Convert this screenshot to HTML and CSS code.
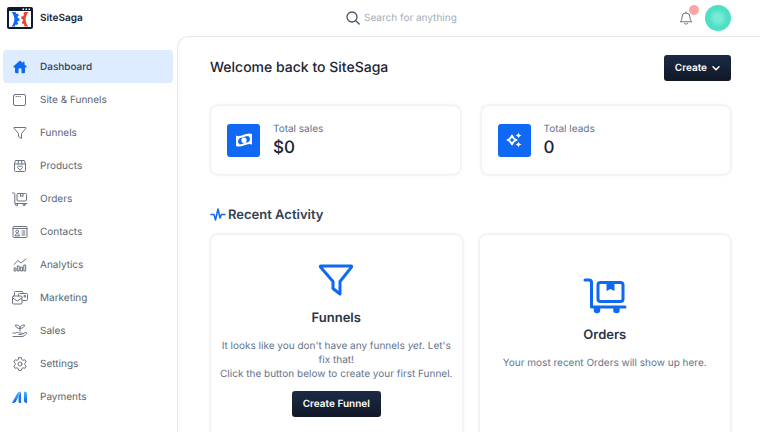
FILE: index.html
```html
<!DOCTYPE html>
<html lang="en">
<head>
    <meta charset="UTF-8">
    <meta name="viewport" content="width=device-width, initial-scale=1.0">
    <title>SiteSaga Dashboard</title>
    <link rel="stylesheet" href="styles.css">
</head>
<body>
    <header class="topbar">
        <a class="brand" href="#">
            <svg class="brand-logo" viewBox="0 0 26 22">
                <rect x="1" y="1" width="24" height="20" rx="1" fill="#fff" stroke="#0d1b2e" stroke-width="2"/>
                <path d="M1 1h24v3H1z" fill="#0d1b2e"/>
                <path d="M15.500 1.500h1.500v1.500h-1.500zM18.500 1.500h1.500v1.500h-1.500zM21.500 1.500h1.500v1.500h-1.500z" fill="#fff"/>
                <path d="M4.500 5h4l.8 2 1.500-.5 1 1.800-1.300 1.400.5 1.300 1.500.7v2l-1.700.3-.5 1.300 1 1.200-1.300 1.500-1.500-.5-.5 2H4.500c3.800-4 3.800-10.500 0-14.500z" fill="#0f69f5"/>
                <path d="M21.500 5h-4l-1 1.500.5 1.500-1 1.300-1.800.2v2l1.600 1 .2 1.500-1.300 1 .8 2 1.500-.2.500 2.700h4c-3.800-4-3.800-10.500 0-14.500z" fill="#f2412f"/>
            </svg>
            <span>SiteSaga</span>
        </a>
        <div class="search">
            <svg class="search-icon" viewBox="0 0 14 14" fill="none" stroke="#475569" stroke-width="1.300" stroke-linecap="round">
                <circle cx="6" cy="6" r="5"/>
                <path d="M9.700 9.700l3.500 3.300"/>
            </svg>
            <input type="search" placeholder="Search for anything" aria-label="Search for anything">
        </div>
        <div class="account">
            <button class="bell" aria-label="Notifications">
                <svg viewBox="0 0 14 14" fill="none" stroke="#64748b" stroke-linecap="round" stroke-linejoin="round">
                    <path d="M7 .8v1M1.500 10.500C3 9 3 7.500 3 6a4 4 0 0 1 8 0c0 1.500 0 3 1.500 4.500zM5.500 12.500c.8.9 2.200.9 3 0"/>
                </svg>
                <span class="bell-badge"></span>
            </button>
            <button class="avatar" aria-label="Account"></button>
        </div>
    </header>

    <div class="layout">
        <nav class="sidebar">
            <a class="nav-item active" href="#">
                <svg viewBox="0 0 16 16">
                    <path d="M8 1.500L1.500 7.300c-.5.500-.2 1.200.5 1.200h1V13c0 .8.4 1.200 1.200 1.200h2.300V10.500c0-.8.5-1.200 1.500-1.200s1.500.4 1.500 1.200v3.700h2.300c.8 0 1.200-.4 1.200-1.200V8.500h1c.7 0 1-.7.5-1.200l-2-1.800V2.800h-1.800v1.100z" fill="#0f69f5"/>
                </svg>
                <span>Dashboard</span>
            </a>
            <a class="nav-item" href="#">
                <svg viewBox="0 0 16 16">
                    <rect x="1.500" y="2.500" width="12" height="11" rx="1.500"/>
                    <path d="M4 4.500h.5M6 4.500h.5M8 4.500h.5"/>
                </svg>
                <span>Site &amp; Funnels</span>
            </a>
            <a class="nav-item" href="#">
                <svg viewBox="0 0 16 16">
                    <path d="M2.300 2.500h11.400c.4 0 .5.400.3.700L9.500 8.500v5L6.500 11.500v-3L2 3.200c-.2-.3-.1-.7.300-.7z"/>
                </svg>
                <span>Funnels</span>
            </a>
            <a class="nav-item" href="#">
                <svg viewBox="0 0 16 16">
                    <path d="M2.500 6v6.500a1 1 0 0 0 1 1h9a1 1 0 0 0 1-1V6l-1.300-3.500H3.800zM2.500 6h11M6.500 2.500L6 6M9.500 2.500l.5 3.500"/>
                    <path d="M8 12L5.700 9.700C4.800 8.500 6.800 7.200 8 8.700c1.200-1.500 3.200-.2 2.300 1z"/>
                </svg>
                <span>Products</span>
            </a>
            <a class="nav-item" href="#">
                <svg viewBox="0 0 16 16">
                    <path d="M.5 2h1.300c.6 0 1 .4 1 1v9.500H15"/>
                    <rect x="5" y="2.500" width="9.500" height="7.500" rx="1"/>
                    <path d="M8.500 2.500v3l1.300-.8 1.200.8v-3"/>
                    <circle cx="4.500" cy="13.800" r="1"/>
                    <circle cx="12" cy="13.800" r="1"/>
                </svg>
                <span>Orders</span>
            </a>
            <a class="nav-item" href="#">
                <svg viewBox="0 0 16 16">
                    <rect x="1" y="2.500" width="14" height="11" rx="1"/>
                    <path d="M1 4.500h14M10 7h3M10 9h3M10 11h3M3 11.500c0-2.500 4.500-2.500 4.500 0z"/>
                    <circle cx="5.200" cy="7.500" r="1.400"/>
                </svg>
                <span>Contacts</span>
            </a>
            <a class="nav-item" href="#">
                <svg viewBox="0 0 16 16">
                    <path d="M2 7.500l4-4 3 2.500 5-4M2.500 11h1.500v3H2.500zM5.700 9h1.500v5H5.700zM9 10h1.500v4H9zM12.200 8h1.500v6h-1.500z"/>
                </svg>
                <span>Analytics</span>
            </a>
            <a class="nav-item" href="#">
                <svg viewBox="0 0 16 16">
                    <path d="M2.500 5V2.500a1 1 0 0 1 1-1H10a1 1 0 0 1 1 1M6.500 6V4.500a1 1 0 0 1 1-1H14.500a1 1 0 0 1 1 1V9.500a1 1 0 0 1-1 1H11M12.500 5.500h1v1.500h-1z"/>
                    <rect x=".5" y="6" width="9.500" height="8" rx="1"/>
                    <path d="M.7 8l4.500 3L9.800 8"/>
                </svg>
                <span>Marketing</span>
            </a>
            <a class="nav-item" href="#">
                <svg viewBox="0 0 16 16">
                    <path d="M8 8V4.800C8 3 6.200 2 3.500 2c0 2.500 2 3.500 4.500 3.500C10.500 5.500 12.500 4 12.500 2 9.800 2 8 3 8 4.800"/>
                    <path d="M1 10h2.500c1.500-1.300 3-.5 4 0h2c1.200 0 1.200 1.500 0 1.500H7M10.500 11l2.800-1.500c1.200-.5 2 .5 1.200 1.300-1.500 1.500-3 2.700-4.500 2.700H1"/>
                </svg>
                <span>Sales</span>
            </a>
            <a class="nav-item" href="#">
                <svg viewBox="0 0 16 16">
                    <path d="M6.700 1.700h2.600l.5 1.900 1.200.7 1.900-.5 1.300 2.200-1.400 1.400v1.300l1.400 1.400-1.300 2.200-1.900-.5-1.200.7-.5 1.900H6.700l-.5-1.900-1.200-.7-1.900.5-1.300-2.200 1.400-1.400V7.400L1.800 6l1.300-2.200 1.900.5 1.200-.7z"/>
                    <circle cx="8" cy="8" r="2"/>
                </svg>
                <span>Settings</span>
            </a>
            <a class="nav-item" href="#">
                <svg viewBox="0 0 16 16">
                    <defs>
                        <linearGradient id="pay" x1="0" y1="0" x2="0" y2="1">
                            <stop offset="0" stop-color="#3fc3fa"/>
                            <stop offset="1" stop-color="#1557e8"/>
                        </linearGradient>
                    </defs>
                    <path d="M0 14L5.500 4Q6.500 2.500 8.500 2.500L4 12.500Q3.200 14 0 14z" fill="url(#pay)"/>
                    <path d="M7.500 5.500L9 2.500V14H7.500Q6.500 14 6.500 12V8z" fill="#1f6df0"/>
                    <path d="M12 2.500Q15 2.500 15 5V14Q12 14 12 11.500z" fill="url(#pay)"/>
                </svg>
                <span>Payments</span>
            </a>
        </nav>

        <main class="content">
            <div class="page-head">
                <h1>Welcome back to SiteSaga</h1>
                <button class="btn">
                    Create
                    <svg class="chevron" viewBox="0 0 8 8" fill="none" stroke="#fff" stroke-width="1.500" stroke-linecap="round" stroke-linejoin="round">
                        <path d="M1 2.700l3 3 3-3"/>
                    </svg>
                </button>
            </div>

            <div class="stats">
                <section class="card stat">
                    <span class="stat-icon">
                        <svg viewBox="0 0 18 18">
                            <path d="M1 4.500C6 7 11 .5 17 3v10.500C12 11 7 17.500 1 15z" fill="#fff"/>
                            <path d="M4.500 7.200c3.500 0 5.500-2.200 9-2.200 0 .9.500 1.400 1.300 1.500v3.300c-.8.1-1.300.5-1.300 1.400-3.500 0-5.500 2.200-9 2.200 0-.9-.6-1.400-1.300-1.500V8.600c.7 0 1.300-.5 1.300-1.400z" fill="#0f69f5"/>
                            <ellipse cx="9" cy="9.200" rx="2.600" ry="2.800" fill="#fff"/>
                        </svg>
                    </span>
                    <div>
                        <p class="stat-label">Total sales</p>
                        <p class="stat-value">$0</p>
                    </div>
                </section>
                <section class="card stat">
                    <span class="stat-icon">
                        <svg viewBox="0 0 18 18">
                            <path d="M7 4.500c.8 2.600 1.900 3.700 4.500 4.500-2.600.8-3.700 1.900-4.500 4.500C6.200 10.900 5.100 9.800 2.500 9 5.100 8.200 6.200 7.100 7 4.500z" fill="none" stroke="#fff" stroke-width="1.800" stroke-linejoin="round"/>
                            <path d="M13.500 1.500c.5 1.900 1.100 2.500 3 3-1.900.5-2.500 1.100-3 3-.5-1.900-1.100-2.500-3-3 1.900-.5 2.500-1.100 3-3zM13.500 10.500c.5 1.900 1.100 2.500 3 3-1.900.5-2.500 1.100-3 3-.5-1.900-1.100-2.500-3-3 1.900-.5 2.500-1.100 3-3z" fill="#fff"/>
                        </svg>
                    </span>
                    <div>
                        <p class="stat-label">Total leads</p>
                        <p class="stat-value">0</p>
                    </div>
                </section>
            </div>

            <h2 class="section-title">
                <svg viewBox="0 0 16 16" fill="none" stroke="#0f69f5" stroke-width="1.500" stroke-linecap="round" stroke-linejoin="round">
                    <path d="M1 7.500h3L5.500 13 8 2l2 9 1.500-3.500H15"/>
                </svg>
                Recent Activity
            </h2>

            <div class="activity">
                <section class="card panel">
                    <svg class="panel-icon" viewBox="0 0 44 36" fill="none" stroke="#0f69f5" stroke-width="3" stroke-linejoin="round">
                        <path d="M7 5h30c.7 0 .9.600.5 1.100L26 20.500V33L19 27.500v-7L6.500 6.100c-.4-.5-.2-1.100.5-1.100z"/>
                    </svg>
                    <h3>Funnels</h3>
                    <p>It looks like you don't have any funnels <em>yet</em>. Let's fix that!<br>Click the button below to create your first Funnel.</p>
                    <button class="btn">Create Funnel</button>
                </section>
                <section class="card panel panel-orders">
                    <svg class="panel-icon" viewBox="0 0 44 36" fill="none" stroke="#0f69f5" stroke-width="3" stroke-linecap="round" stroke-linejoin="round">
                        <path d="M2 2h4c1.500 0 2.500 1 2.500 2.500V29H42"/>
                        <rect x="15" y="4.500" width="25" height="19" rx="2.500"/>
                        <path d="M23.500 5h8v8l-4-2-4 2z" fill="#0f69f5" stroke="none"/>
                        <circle cx="14" cy="32" r="3.300" fill="#0f69f5" stroke="none"/>
                        <circle cx="33.500" cy="32" r="3.300" fill="#0f69f5" stroke="none"/>
                    </svg>
                    <h3>Orders</h3>
                    <p>Your most recent Orders will show up here.</p>
                </section>
            </div>
        </main>
    </div>
</body>
</html>
```

FILE: styles.css
```css
:root {
    --blue: #0f69f5;
    --ink: #1a2433;
    --muted: #64748b;
    --line: #e2e8ee;
    --sidebar: 177px;
}

* {
    box-sizing: border-box;
}
body {
    display: flex;
    flex-direction: column;
    height: 100vh;
    margin: 0;
    overflow: hidden;
    background: #fff;
    color: var(--ink);
    font-family: Inter, sans-serif;
    font-size: 10px;
    line-height: 14px;
    text-rendering: geometricPrecision;
}
h1, h2, h3, p {
    margin: 0;
}
svg {
    display: block;
    flex: none;
}
a {
    color: inherit;
    text-decoration: none;
}
button {
    padding: 0;
    border: none;
    background: none;
    font-family: inherit;
    cursor: pointer;
    text-rendering: inherit;
}

/* Top bar */
.topbar {
    display: flex;
    align-items: center;
    flex: none;
    height: 36px;
    padding-right: 29px;
}
.brand {
    display: flex;
    align-items: center;
    gap: 7px;
    width: var(--sidebar);
    padding-left: 7px;
    font-weight: 600;
}
.brand-logo {
    width: 26px;
    height: 22px;
}
.search {
    display: flex;
    align-items: center;
    gap: 4px;
    flex: 1;
    padding-left: 169px;
}
.search-icon {
    width: 14px;
    height: 14px;
}
.search input {
    width: 160px;
    padding: 0;
    border: none;
    outline: none;
    background: none;
    font-family: inherit;
    font-size: 10px;
    text-rendering: inherit;
}
.search input::placeholder {
    color: #a3adba;
}
.account {
    display: flex;
    align-items: center;
    gap: 12px;
}
.bell {
    position: relative;
}
.bell svg {
    width: 14px;
    height: 14px;
}
.bell-badge {
    position: absolute;
    top: -6px;
    right: -6px;
    width: 10px;
    height: 10px;
    border-radius: 50%;
    background: #ffa3a3;
}
.avatar {
    width: 26px;
    height: 26px;
    border-radius: 50%;
    background: radial-gradient(#79ead4 20%, #4de0c4 50%);
}

/* Sidebar */
.layout {
    display: flex;
    flex: 1;
    min-height: 0;
}
.sidebar {
    flex: none;
    width: var(--sidebar);
    padding: 14px 4px 0 3px;
}
.nav-item {
    display: flex;
    align-items: center;
    gap: 12px;
    height: 33px;
    padding-left: 9px;
    border-radius: 4px;
    color: #5b6470;
}
.nav-item svg {
    width: 16px;
    height: 16px;
    fill: none;
    stroke: #6b7480;
    stroke-width: 1;
    stroke-linecap: round;
    stroke-linejoin: round;
}
.nav-item.active svg,
.nav-item:last-child svg {
    stroke: none;
}
.nav-item.active {
    background: #ddecfe;
    color: #334155;
    font-weight: 500;
}

/* Main content */
.content {
    flex: 1;
    padding: 18px 29px 0 32px;
    border-top: 1px solid var(--line);
    border-left: 1px solid var(--line);
    border-top-left-radius: 12px;
    overflow: hidden;
}
.page-head {
    display: flex;
    justify-content: space-between;
    align-items: center;
}
h1 {
    font-size: 14px;
    font-weight: 500;
    line-height: 18px;
}
.btn {
    display: inline-flex;
    align-items: center;
    gap: 5px;
    height: 26px;
    padding: 0 11px;
    border-radius: 3px;
    background: linear-gradient(#1b2a44, #111927);
    color: #fff;
    font-size: 10px;
    font-weight: 600;
}
.chevron {
    width: 8px;
    height: 8px;
}
.card {
    border: 1px solid #f0f1f3;
    border-radius: 8px;
    background: #fff;
    box-shadow: 0 0 3px rgba(15, 23, 42, 0.1);
}
.stats {
    display: grid;
    grid-template-columns: 1fr 1fr;
    gap: 20px;
    margin-top: 24px;
}
.stat {
    display: flex;
    align-items: center;
    gap: 13px;
    height: 70px;
    padding: 0 16px;
}
.stat-icon {
    display: grid;
    place-items: center;
    width: 33px;
    height: 33px;
    border-radius: 3px;
    background: var(--blue);
}
.stat-icon svg {
    width: 18px;
    height: 18px;
}
.stat-label {
    color: var(--muted);
    line-height: 16px;
}
.stat-value {
    font-size: 17px;
    font-weight: 500;
    line-height: 22px;
}
.section-title {
    display: flex;
    align-items: center;
    gap: 2px;
    margin: 31px 0 10px;
    font-size: 13px;
    font-weight: 600;
    line-height: 18px;
    color: #334155;
}
.section-title svg {
    width: 16px;
    height: 16px;
}
.activity {
    display: grid;
    grid-template-columns: 1fr 1fr;
    gap: 16px;
}
.panel {
    display: flex;
    flex-direction: column;
    align-items: center;
    min-height: 220px;
    padding: 26px 8px;
    text-align: center;
}
.panel-orders {
    padding-top: 43px;
}
.panel-icon {
    width: 44px;
    height: 36px;
}
.panel h3 {
    margin: 12px 0;
    font-size: 13px;
    font-weight: 600;
    line-height: 18px;
    color: #2b3648;
}
.panel p {
    color: var(--muted);
}
.panel .btn {
    margin-top: 10px;
}
```
